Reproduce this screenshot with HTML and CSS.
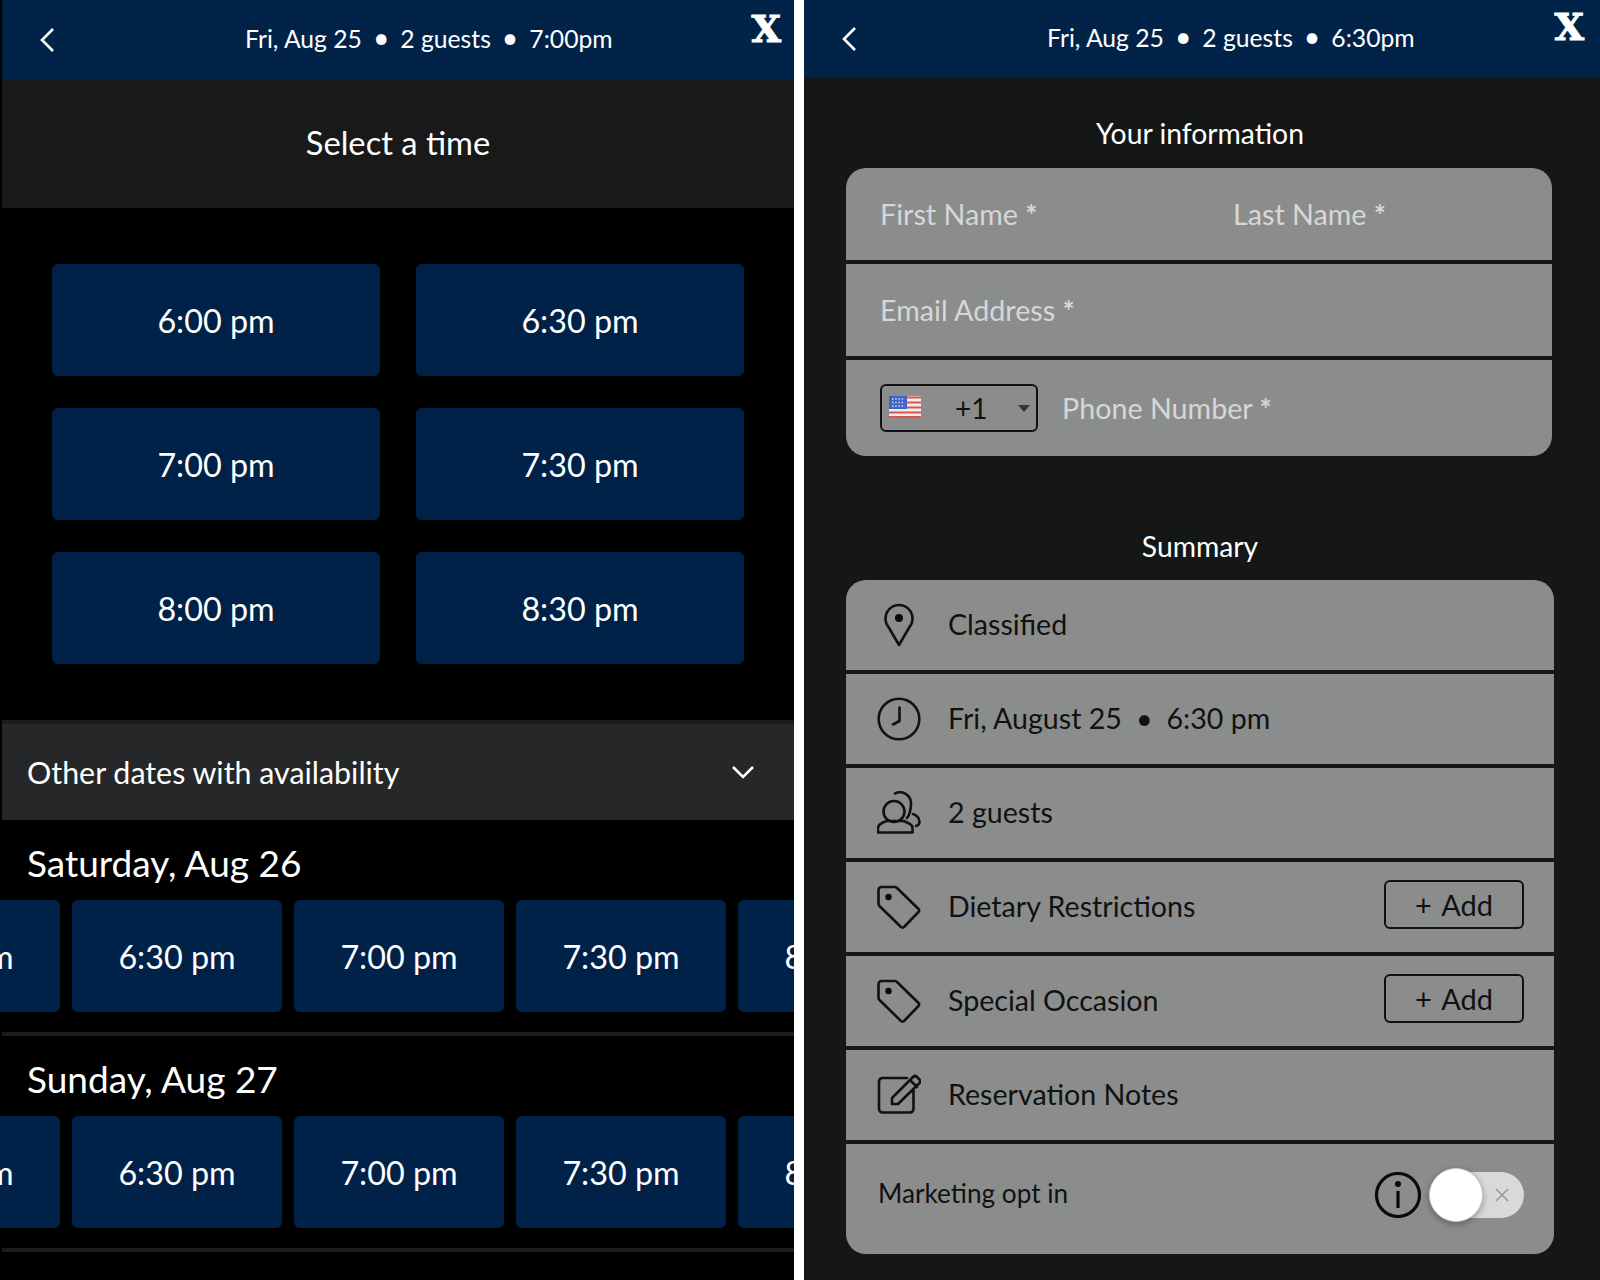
FILE: index.html
```html
<!DOCTYPE html>
<html lang="en">
<head>
<meta charset="utf-8">
<title>Reservation</title>
<link rel="stylesheet" href="styles.css">
</head>
<body>
<main class="screen screen-times">
  <header class="topbar topbar-tall">
    <svg class="back" viewBox="0 0 14 24"><path d="M13 1 2 12l11 11"/></svg>
    <div class="crumbs">Fri, Aug 25<span class="dot">•</span>2 guests<span class="dot">•</span>7:00pm</div>
    <span class="logo">X</span>
  </header>
  <h1 class="select-title">Select a time</h1>
  <section class="time-grid">
    <button class="slot">6:00 pm</button>
    <button class="slot">6:30 pm</button>
    <button class="slot">7:00 pm</button>
    <button class="slot">7:30 pm</button>
    <button class="slot">8:00 pm</button>
    <button class="slot">8:30 pm</button>
  </section>
  <div class="other-dates">
    <span>Other dates with availability</span>
    <svg class="chev" viewBox="0 0 22 13"><path d="M1 1l10 10L21 1"/></svg>
  </div>
  <section class="day">
    <h2 class="day-name">Saturday, Aug 26</h2>
    <div class="strip">
      <button class="slot chip">6:00 pm</button>
      <button class="slot chip">6:30 pm</button>
      <button class="slot chip">7:00 pm</button>
      <button class="slot chip">7:30 pm</button>
      <button class="slot chip">8:00 pm</button>
    </div>
  </section>
  <section class="day">
    <h2 class="day-name">Sunday, Aug 27</h2>
    <div class="strip">
      <button class="slot chip">6:00 pm</button>
      <button class="slot chip">6:30 pm</button>
      <button class="slot chip">7:00 pm</button>
      <button class="slot chip">7:30 pm</button>
      <button class="slot chip">8:00 pm</button>
    </div>
  </section>
</main>
<main class="screen screen-info">
  <header class="topbar topbar-short">
    <svg class="back" viewBox="0 0 14 24"><path d="M13 1 2 12l11 11"/></svg>
    <div class="crumbs">Fri, Aug 25<span class="dot">•</span>2 guests<span class="dot">•</span>6:30pm</div>
    <span class="logo">X</span>
  </header>
  <div class="info-body">
    <h2 class="section-title">Your information</h2>
    <form class="card form-card">
      <div class="form-row form-row-names">
        <span class="ph ph-first">First Name <b class="star">*</b></span>
        <span class="ph">Last Name <b class="star">*</b></span>
      </div>
      <div class="form-row"><span class="ph">Email Address <b class="star">*</b></span></div>
      <div class="form-row form-row-phone">
        <div class="dial">
          <svg class="flag" viewBox="0 0 32 22">
            <rect width="32" height="22" fill="#f3ecec"/>
            <path d="M0 1.5h32M0 6.5h32M0 11.500h32M0 16.500h32M0 21h32" stroke="#d8564f" stroke-width="2.200"/>
            <rect width="18" height="13" fill="#3f63c8"/>
            <path d="M3 3h13M3 6.500h13M3 10h13" stroke="#cfd9f2" stroke-width="1.400" stroke-dasharray="1.500 1.700"/>
          </svg>
          <span class="dial-code">+1</span>
          <span class="caret"></span>
        </div>
        <span class="ph">Phone Number <b class="star">*</b></span>
      </div>
    </form>
    <h2 class="section-title section-title-gap">Summary</h2>
    <section class="card summary-card">
      <div class="sum-row">
        <svg class="ico" viewBox="0 0 44 44"><path d="M22 42 11.500 24A13.500 13.500 0 1 1 32.500 24Z"/><circle class="fill" cx="22" cy="15" r="4"/></svg>
        <span class="sum-text">Classified</span>
      </div>
      <div class="sum-row">
        <svg class="ico" viewBox="0 0 44 44"><circle cx="22" cy="22" r="20.300"/><path d="M22.500 10.500V24L16 27.500"/></svg>
        <span class="sum-text">Fri, August 25<span class="dot dot-wide">•</span>6:30 pm</span>
      </div>
      <div class="sum-row">
        <svg class="ico" viewBox="0 0 44 44"><circle cx="17" cy="20.500" r="10.500"/><path d="M1 41.500V37Q1 34 5 32L9.500 30H27L31 32Q35.500 34 35.500 37V41.500ZM18 2.500A11 11 0 0 1 34 12Q34 22 30 27M36 23Q42 25 42.500 30.500Q42.500 34 39 35"/></svg>
        <span class="sum-text">2 guests</span>
      </div>
      <div class="sum-row">
        <svg class="ico" viewBox="0 0 44 44"><path d="M1.500 5a3 3 0 0 1 3-3H18a3 3 0 0 1 2 1L41.500 24a2 2 0 0 1 0 3L27 42a2 2 0 0 1-3 0L2.500 21a3 3 0 0 1-1-2Z"/><circle class="fill" cx="11.500" cy="12" r="3.200"/></svg>
        <span class="sum-text grow">Dietary Restrictions</span>
        <button class="add">+ Add</button>
      </div>
      <div class="sum-row">
        <svg class="ico" viewBox="0 0 44 44"><path d="M1.500 5a3 3 0 0 1 3-3H18a3 3 0 0 1 2 1L41.500 24a2 2 0 0 1 0 3L27 42a2 2 0 0 1-3 0L2.500 21a3 3 0 0 1-1-2Z"/><circle class="fill" cx="11.500" cy="12" r="3.200"/></svg>
        <span class="sum-text grow">Special Occasion</span>
        <button class="add">+ Add</button>
      </div>
      <div class="sum-row">
        <svg class="ico" viewBox="0 0 44 44"><path d="M30 5H5.500A3.500 3.500 0 0 0 2 8.500V36a3.500 3.500 0 0 0 3.500 3.500H33a3.500 3.500 0 0 0 3.500-3.500V17M15 31V25L36 4Q38 2 40 4L42.500 6.500Q44 8.500 42 10.500L21 31ZM33 7l7 7"/></svg>
        <span class="sum-text">Reservation Notes</span>
      </div>
      <div class="sum-row sum-row-last">
        <span class="grow optin">Marketing opt in</span>
        <svg class="info" viewBox="0 0 46 46"><circle cx="23" cy="23" r="21.500"/><path d="M23 19v17"/><circle class="fill" cx="23" cy="12" r="3"/></svg>
        <div class="toggle">
          <span class="knob"></span>
          <svg class="toggle-x" viewBox="0 0 14 14"><path d="M1 1l12 12M13 1 1 13"/></svg>
        </div>
      </div>
    </section>
  </div>
</main>
</body>
</html>
```
FILE: styles.css
```css
* { box-sizing: border-box; }
html, body { margin: 0; padding: 0; }
body {
  display: flex;
  width: 1600px;
  height: 1280px;
  overflow: hidden;
  background: #fff;
  font-family: Lato, "Noto Sans", sans-serif;
  color: #fff;
}
button { font: inherit; color: inherit; border: 0; padding: 0; background: none; }
h1, h2 { margin: 0; font-weight: 400; }

.screen { height: 1280px; overflow: hidden; }
.screen-times { width: 794px; padding-left: 2px; background: #000; flex: none; }
.screen-info { width: 796px; margin-left: 10px; background: #151717; flex: none; }

.topbar {
  display: flex;
  align-items: center;
  padding: 0 13px 0 38px;
  background: #012348;
}
.topbar-tall { height: 80px; }
.topbar-short { height: 78px; padding-right: 16px; }
.back { width: 14px; height: 24px; flex: none; fill: none; stroke: #fff; stroke-width: 2.600; margin-right: 191px; }
.crumbs { font-size: 24.700px; line-height: 30px; white-space: nowrap; padding-bottom: 3px; }
.dot { margin: 0 11px; font-size: 1.150em; line-height: 1; }
.dot-wide { margin: 0 14px; font-size: 1em; }
.logo {
  margin-left: auto;
  align-self: flex-start;
  margin-top: 8px;
  font: 700 38px/42px "DejaVu Serif", serif;
  -webkit-text-stroke: 1px #fff;
}
.topbar-short .logo { margin-top: 6px; }

.select-title {
  height: 128px;
  font-size: 32.700px;
  line-height: 126px;
  text-align: center;
  background: #181918;
}
.time-grid {
  display: grid;
  grid-template-columns: 328px 328px;
  grid-auto-rows: 112px;
  column-gap: 36px;
  row-gap: 32px;
  padding: 56px 0 56px 50px;
}
.slot {
  display: flex;
  align-items: center;
  justify-content: center;
  background: #012248;
  border-radius: 6px;
  font-size: 32.300px;
  color: #fff;
  white-space: nowrap;
}
.other-dates {
  display: flex;
  align-items: center;
  justify-content: space-between;
  height: 100px;
  padding: 0 40px 0 25px;
  background: #262729;
  border-top: 4px solid #1c1c1c;
  font-size: 30.400px;
}
.chev { width: 22px; height: 13px; fill: none; stroke: #fff; stroke-width: 2.600; }
.day { height: 216px; border-bottom: 4px solid #1c1c1c; }
.day-name { height: 80px; padding: 6px 0 0 25px; font-size: 37px; line-height: 74px; }
.strip { display: flex; gap: 12px; margin-left: -152px; }
.chip { flex: 0 0 210px; height: 112px; }

.info-body { padding: 0 46px 0 42px; }
.section-title { padding: 38px 0 18px; font-size: 28.300px; line-height: 34px; text-align: center; }
.section-title-gap { padding-top: 73px; padding-bottom: 17px; }
.card { border-radius: 20px; overflow: hidden; display: flex; flex-direction: column; background: #151717; }
.form-card { width: 706px; gap: 4px; }
.form-row {
  display: flex;
  align-items: center;
  height: 92px;
  padding-left: 34px;
  background: #8b8d8c;
}
.form-row-phone { height: 96px; }
.ph { font-size: 28.700px; color: #d6d7d6; white-space: nowrap; }
.ph-first { width: 353px; }
.star { font-weight: 700; }
.dial {
  display: flex;
  align-items: center;
  width: 158px;
  height: 48px;
  margin-right: 24px;
  padding-left: 7px;
  border: 2px solid #111;
  border-radius: 6px;
  color: #111;
}
.flag { width: 32px; height: 22px; flex: none; margin-bottom: 2px; }
.dial-code { margin-left: 34px; font-size: 28px; }
.caret {
  margin-left: auto;
  margin-right: 6px;
  border: 6px solid transparent;
  border-top: 7px solid #333;
  border-bottom: 0;
}
.summary-card { gap: 4px; }
.sum-row {
  display: flex;
  align-items: center;
  gap: 27px;
  height: 90px;
  padding: 0 30px 0 31px;
  background: #8b8d8c;
  color: #111;
  white-space: nowrap;
}
.sum-text { font-size: 28.600px; padding-bottom: 2px; }
.sum-row-last { height: 110px; gap: 8px; padding: 0 30px 8px 32px; }
.grow { flex: 1; }
.ico { width: 44px; height: 44px; flex: none; fill: none; stroke: #111; stroke-width: 2.600; stroke-linejoin: round; stroke-linecap: round; }
.fill { fill: #0a0a0a; stroke: none; }
.add {
  width: 140px;
  height: 49px;
  margin-bottom: 5px;
  border: 2px solid #111;
  border-radius: 6px;
  font-size: 29px;
  word-spacing: 3px;
  color: #111;
}
.optin { font-size: 26.200px; padding-bottom: 4px; }
.info { width: 46px; height: 46px; flex: none; fill: none; stroke: #0a0a0a; stroke-width: 3.200; }
.toggle {
  position: relative;
  width: 95px;
  height: 46px;
  flex: none;
  border-radius: 23px;
  background: #d9d9d9;
}
.knob {
  position: absolute;
  left: 0;
  top: -4px;
  width: 54px;
  height: 54px;
  border-radius: 50%;
  background: #fff;
  border: 1px solid #ccc;
  box-shadow: 0 2px 6px rgba(0,0,0,.35);
}
.toggle-x {
  position: absolute;
  right: 15px;
  top: 16px;
  width: 14px;
  height: 14px;
  fill: none;
  stroke: #999;
  stroke-width: 1.600;
}
```
